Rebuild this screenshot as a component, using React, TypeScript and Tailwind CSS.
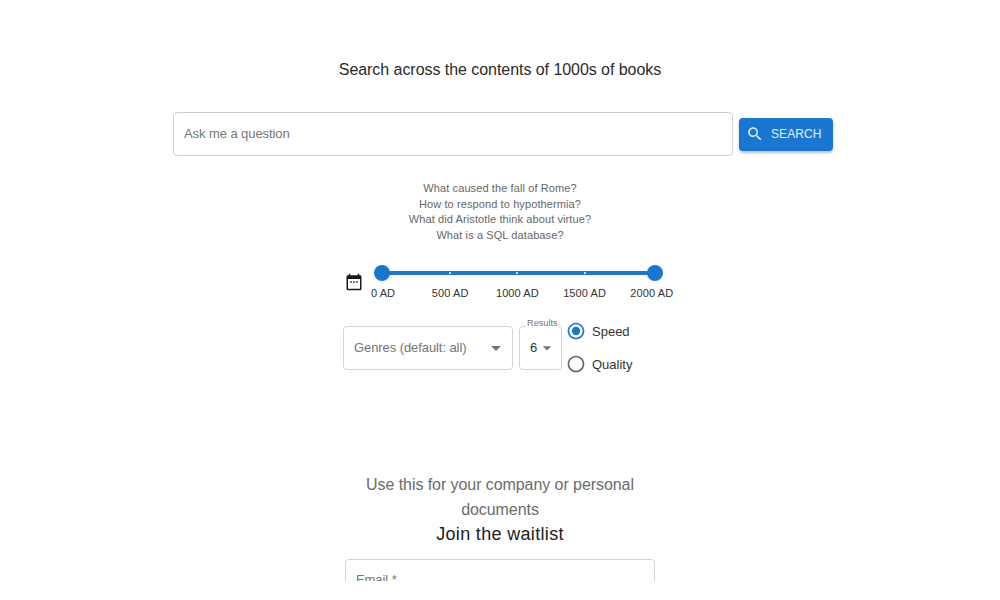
import React from "react";

const examples = [
  "What caused the fall of Rome?",
  "How to respond to hypothermia?",
  "What did Aristotle think about virtue?",
  "What is a SQL database?",
];

const marks = ["0 AD", "500 AD", "1000 AD", "1500 AD", "2000 AD"];

const Caret = () => (
  <svg className="h-6 w-6 text-[#757575]" viewBox="0 0 24 24" fill="currentColor">
    <path d="M7 10l5 5 5-5z" />
  </svg>
);

const Radio = ({ checked, label }: { checked?: boolean; label: string }) => (
  <label className="flex h-[33px] items-center gap-[6px]">
    <svg className={checked ? "h-[20px] w-[20px] text-[#1976d2]" : "h-[20px] w-[20px] text-[#666666]"} viewBox="0 0 24 24" fill="currentColor">
      <path d="M12 2C6.48 2 2 6.48 2 12s4.48 10 10 10 10-4.48 10-10S17.52 2 12 2zm0 18c-4.42 0-8-3.58-8-8s3.58-8 8-8 8 3.58 8 8-3.58 8-8 8z" />
      {checked && <circle cx="12" cy="12" r="5" />}
    </svg>
    <span className="text-[13px] text-[#333333]">{label}</span>
  </label>
);

export default function App() {
  return (
    <div className="flex h-[581px] flex-col items-center overflow-hidden bg-white font-['Liberation_Sans',Arial,sans-serif]">
      <h1 className="mt-[60px] text-[16px] leading-[20px] tracking-[-0.05px] text-[#2b2b2b]">
        Search across the contents of 1000s of books
      </h1>

      <div className="ml-[6px] mt-[32px] flex items-center gap-[6px]">
        <div className="flex h-[44px] w-[560px] items-center rounded-[4px] border border-[#cfcfcf] px-[10px] text-[13px] tracking-[-0.08px] text-[#757575]">
          Ask me a question
        </div>
        <button className="flex h-[33px] w-[94px] items-center gap-[7px] rounded-[4px] bg-[#1976d2] pl-[7px] text-[12px] tracking-[0.1px] text-[#e3f0fb] shadow-[0_2px_3px_rgba(0,0,0,0.25)]">
          <svg className="h-[18px] w-[18px]" viewBox="0 0 24 24" fill="currentColor">
            <path d="M15.5 14h-.79l-.28-.27C15.41 12.59 16 11.11 16 9.5 16 5.91 13.09 3 9.5 3S3 5.91 3 9.5 5.91 16 9.5 16c1.61 0 3.09-.59 4.23-1.57l.27.28v.79l5 4.99L20.49 19l-4.99-5zm-6 0C7.01 14 5 11.99 5 9.5S7.01 5 9.5 5 14 7.01 14 9.5 11.99 14 9.5 14z" />
          </svg>
          SEARCH
        </button>
      </div>

      <div className="mt-[25px] text-center text-[11px] leading-[15.7px] tracking-[0.1px] text-[#666666]">
        {examples.map((q) => (
          <div key={q}>{q}</div>
        ))}
      </div>

      <div className="mt-[20px] flex w-[316px] items-start">
        <svg className="ml-[3px] mt-[9px] h-[18px] w-[18px] shrink-0 text-[#1a1a1a]" viewBox="0 0 24 24" fill="currentColor">
          <path d="M20 3h-1V1h-2v2H7V1H5v2H4c-1.1 0-2 .9-2 2v16c0 1.1.9 2 2 2h16c1.1 0 2-.9 2-2V5c0-1.1-.9-2-2-2zm0 18H4V8h16v13z" />
          <path d="M7 11h2v2H7zM11 11h2v2h-2zM15 11h2v2h-2z" />
        </svg>
        <div className="relative ml-[19px] mt-[7px] h-[4px] w-[273px] rounded-full bg-[#1976d2]">
          {[1, 2, 3].map((n) => (
            <span key={n} className="absolute top-[1px] h-[2px] w-[2px] bg-[#cfe3f7]" style={{ left: `${n * 67.5 - 1}px` }} />
          ))}
          <span className="absolute left-[-8px] top-[-6px] h-[16px] w-[16px] rounded-full bg-[#1976d2]" />
          <span className="absolute right-[-8px] top-[-6px] h-[16px] w-[16px] rounded-full bg-[#1976d2]" />
          {marks.map((m, i) => (
            <span
              key={m}
              className="absolute top-[15px] -translate-x-1/2 whitespace-nowrap text-[11px] leading-[14px] tracking-[0.1px] text-[#333333]"
              style={{ left: `${1 + i * 67.2}px` }}
            >
              {m}
            </span>
          ))}
        </div>
      </div>

      <div className="mt-[24px] flex h-[66px] w-[314px] items-start">
        <div className="mt-[11px] flex h-[44px] w-[170px] items-center justify-between rounded-[4px] border border-[#d5d5d5] pl-[10px] pr-[4px] text-[13px] tracking-[-0.08px] text-[#757575]">
          Genres (default: all)
          <Caret />
        </div>
        <div className="relative ml-[6px] mt-[11px] flex h-[44px] w-[43px] items-center rounded-[4px] border border-[#d5d5d5] pl-[10px] text-[13px] text-[#333333]">
          <span className="absolute left-[6px] top-[-10px] bg-white px-[1px] text-[9.2px] leading-[12px] text-[#757575]">Results</span>
          6
          <svg className="h-[20px] w-[20px] text-[#757575]" viewBox="0 0 24 24" fill="currentColor">
            <path d="M7 10l5 5 5-5z" />
          </svg>
        </div>
        <div className="ml-[4px] flex flex-col">
          <Radio checked label="Speed" />
          <Radio label="Quality" />
        </div>
      </div>

      <p className="mt-[91px] w-[310px] text-center text-[16px] leading-[25px] tracking-[-0.07px] text-[#6b6b6b]">
        Use this for your company or personal documents
      </p>
      <h2 className="text-[18px] leading-[25px] tracking-[0.33px] text-[#222222]">Join the waitlist</h2>

      <div className="mt-[12px] h-[56px] w-[310px] shrink-0 rounded-[4px] border border-[#d5d5d5] px-[10px] pt-[12px] text-[13px] leading-[16px] tracking-[-0.08px] text-[#757575]">
        Email *
      </div>
    </div>
  );
}
